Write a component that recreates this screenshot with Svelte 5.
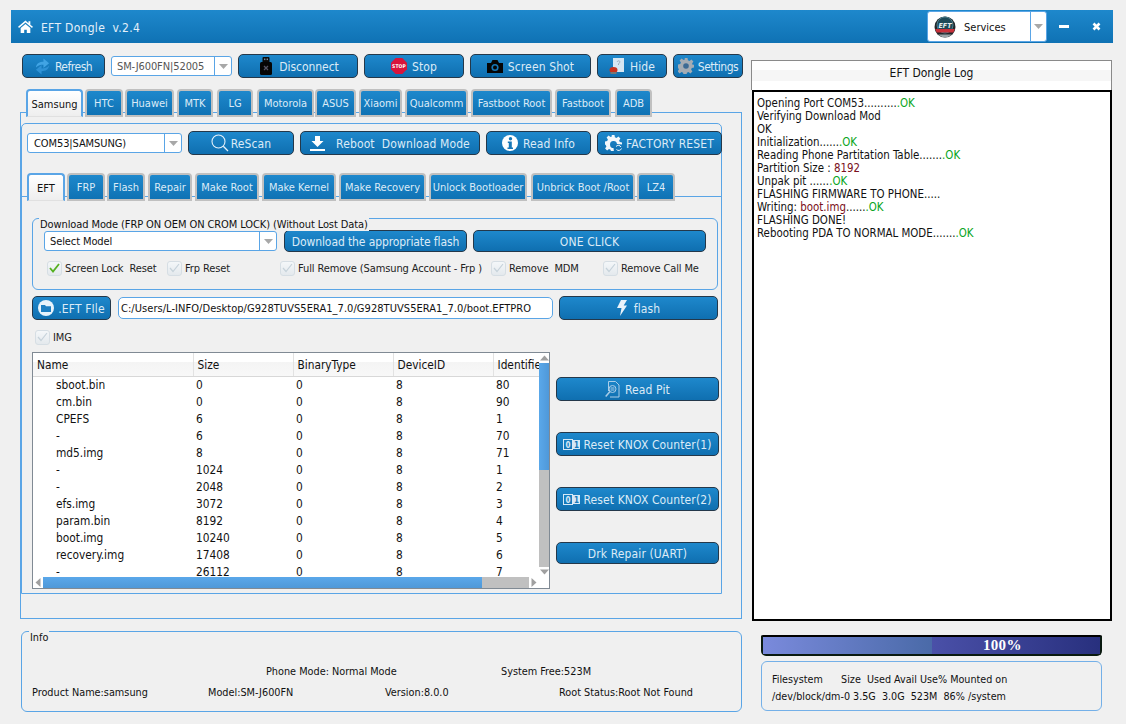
<script>
  const mainTabs = [['Samsung',57,0],['HTC',38,2],['Huawei',49,2],['MTK',36,3],['LG',36,4],['Motorola',57,4],['ASUS',41,1],['Xiaomi',43,3],['Qualcomm',63,3],['Fastboot Root',81,3],['Fastboot',56,3],['ADB',37,4]];
  const subTabs = [['EFT',38,0],['FRP',38,2],['Flash',38,2],['Repair',44,3],['Make Root',64,3],['Make Kernel',74,3],['Make Recovery',87,3],['Unlock Bootloader',98,3],['Unbrick Boot /Root',104,4],['LZ4',38,2]];
  const checks = [['Screen Lock  Reset',120,true],['Frp Reset',113,false],['Full Remove (Samsung Account - Frp )',211,false],['Remove  MDM',112,false],['Remove Call Me',110,false]];
  const rows = [['sboot.bin',0,80],['cm.bin',0,90],['CPEFS',6,1],['-',6,70],['md5.img',8,71],['-',1024,1],['-',2048,2],['efs.img',3072,3],['param.bin',8192,4],['boot.img',10240,5],['recovery.img',17408,6],['-',26112,7]];
</script>

{#snippet arrow()}
  <svg class="arrow" viewBox="0 0 9 5" width="9" height="5"><path d="M0 0h9L4.5 5z" fill="#a8a8a8"/></svg>
{/snippet}

{#snippet binary()}
  <svg viewBox="0 0 17 11" width="17" height="11"><rect x=".5" y=".5" width="9" height="10" fill="none" stroke="#d6e8f6"/><rect x="10" y="1" width="7" height="9" fill="#d6e8f6"/><text x="5" y="8.5" class="bin a">0</text><text x="13.5" y="8.5" class="bin b">1</text></svg>
{/snippet}

{#snippet tabs(list)}
  {#each list as [label, w, gap], i}
    <div class="tab" class:active={i === 0} style:width="{w}px" style:margin-left="{gap}px">{label}</div>
  {/each}
{/snippet}

<div class="app">
  <header class="title">
    <svg class="home" viewBox="0 0 16 14" width="15" height="13"><path fill="#fff" d="M8 .6 0 7.4l1 1.2L8 2.7l7 5.9 1-1.2-2.8-2.4V1.4h-2v2.1zM2.8 8.6V14h3.800v-3.6h2.800V14h3.800V8.6L8 4.200z"/></svg>
    <span class="title-text">EFT Dongle&nbsp; v.2.4</span>
    <div class="services">
      <span class="services-main">
        <svg viewBox="0 0 22 22" width="22" height="22"><circle cx="11" cy="11" r="10.500" fill="#20282c"/><circle cx="11" cy="9" r="8" fill="#1f4a58" stroke="#4f7f8c"/><text x="11" y="11.500" class="logo-text">EFT</text><path d="M1.200 13h19.600a10.500 10.500 0 0 1-1.500 3.500H2.700A10.500 10.500 0 0 1 1.200 13z" fill="#c8303a"/><path d="M4 18.500h14a10.500 10.500 0 0 1-14 0z" fill="#9aa4a8"/></svg>
        <span>Services</span>
      </span>
      <span class="services-drop">{@render arrow()}</span>
    </div>
    <span class="winbtn"><svg viewBox="0 0 10 3" width="10" height="3"><rect width="10" height="3" fill="#fff"/></svg></span>
    <span class="winbtn"><svg viewBox="0 0 9 9" width="9" height="9"><path d="M1.500 1.500l6 6M7.500 1.500l-6 6" stroke="#fff" stroke-width="2.600"/></svg></span>
  </header>

  <div class="columns">
    <main class="left">
      <div class="toolbar">
        <button class="btn w83 narrow">
          <svg viewBox="0 0 16 17" width="15" height="17"><path fill="#41a4e4" d="M1 9.500C1.500 5 5 3.500 9 3.500V0l6 5-6 5V6.500C6 6.500 3 7 1 9.500z"/><path fill="#2f92d6" d="M15 7.500C14.500 12 11 13.500 7 13.500V17l-6-5 6-5v3.500c3 0 6-.5 8-3z"/></svg>
          <span>Refresh</span>
        </button>
        <div class="combo w121 dim"><span class="combo-text">SM-J600FN|52005</span><span class="combo-drop">{@render arrow()}</span></div>
        <button class="btn w120 g7 disc">
          <svg viewBox="0 0 12 18" width="12" height="18"><rect x="2.500" y="0" width="7" height="6" rx="1" fill="#0a0a0a"/><rect x="4" y="1.500" width="1.400" height="1.600" fill="#789"/><rect x="6.600" y="1.500" width="1.400" height="1.600" fill="#789"/><rect x="0" y="5" width="12" height="13" rx="1.500" fill="#050505"/><path d="M4 9l4 4M8 9l-4 4" stroke="#556" stroke-width="1.300"/></svg>
          <span>Disconnect</span>
        </button>
        <button class="btn w100">
          <svg viewBox="0 0 16 16" width="16" height="16"><path fill="#d8143c" d="M4.700 0h6.600L16 4.700v6.600L11.300 16H4.700L0 11.300V4.700z"/><text x="8" y="10" class="stop">STOP</text></svg>
          <span>Stop</span>
        </button>
        <button class="btn w121">
          <svg viewBox="0 0 16 13" width="16" height="13"><path fill="#050505" d="M0 3h4l1.500-3h5L12 3h4v10H0z"/><circle cx="8" cy="7.500" r="3.600" fill="#1677b8"/><circle cx="8" cy="7.500" r="2" fill="#050505"/></svg>
          <span>Screen Shot</span>
        </button>
        <button class="btn w70">
          <svg viewBox="0 0 16 18" width="16" height="18"><path fill="#d6e6f2" d="M4 1h11v14H4z"/><path d="M8 5c1-2 3-1 3 0s-2 1-1.500 3" stroke="#9ab" fill="none"/><ellipse cx="4.500" cy="13" rx="4" ry="3" fill="#c8321e"/><rect x="1.500" y="15" width="6" height="2" fill="#777"/></svg>
          <span>Hide</span>
        </button>
        <button class="btn w70 narrow g4">
          <svg viewBox="0 0 16 16" width="16" height="16"><path fill="#a4acb4" d="M6.500 0h3l.4 2.200 1.600.7L13.400 1.600l2 2-1.300 1.900.7 1.600L16 6.500v3l-2.200.4-.7 1.600 1.300 1.900-2 2-1.900-1.300-1.600.7-.4 2.200h-3l-.4-2.200-1.600-.7-1.900 1.300-2-2 1.300-1.900-.7-1.600L0 9.500v-3l2.200-.4.700-1.600L1.600 2.600l2-2 1.900 1.300 1.600-.7z"/><circle cx="8" cy="8" r="2.800" fill="#3c6a94"/></svg>
          <span>Settings</span>
        </button>
      </div>

      <div class="tabbar main-tabs">{@render tabs(mainTabs)}</div>

      <section class="pane">
        <div class="frame">
          <div class="scan-row">
            <div class="combo w155 com"><span class="combo-text">COM53|SAMSUNG)</span><span class="combo-drop">{@render arrow()}</span></div>
            <button class="btn w106 g2">
              <svg viewBox="0 0 18 18" width="18" height="18"><circle cx="7.500" cy="7.500" r="6.500" fill="none" stroke="#e4f0fa" stroke-width="1.100"/><path d="M12.300 12.300l4.700 4.700" stroke="#e4f0fa" stroke-width="1.300"/></svg>
              <span>ReScan</span>
            </button>
            <button class="btn w180 wide-gap">
              <svg viewBox="0 0 15 15" width="15" height="15"><path fill="#fff" d="M5 0h5v5h3.500L7.500 11 1.500 5H5z"/><rect y="13" width="15" height="2" fill="#fff"/></svg>
              <span>Reboot&nbsp; Download Mode</span>
            </button>
            <button class="btn w105">
              <svg viewBox="0 0 16 16" width="16" height="16"><circle cx="8" cy="8" r="8" fill="#fff"/><circle cx="8.500" cy="3.700" r="1.700" fill="#1677b8"/><path fill="#1677b8" d="M5.800 6.500h4v6h1.200v1.500H5.500v-1.500h1.300V8H5.800z"/></svg>
              <span>Read Info</span>
            </button>
            <button class="btn w125 g4">
              <svg viewBox="0 0 17 16" width="17" height="16"><path fill="#f2f7fb" d="M6.500 0h3l.4 2.200 1.600.7 1.900-1.300 2 2-1.300 1.900.7 1.600 2.200.4v2l-5-.5a3.500 3.500 0 1 0-3.500 4l.5 4h-3l-.4-2.200-1.600-.7-1.900 1.300-2-2 1.300-1.900-.7-1.600L0 9.500v-3l2.200-.4.700-1.600L1.600 2.600l2-2 1.900 1.300 1.600-.7z"/><path d="M11 11.500a3 3 0 0 1 5 .5M16.500 13.500a3 3 0 0 1-5 1" stroke="#f2f7fb" fill="none"/></svg>
              <span>FACTORY RESET</span>
            </button>
          </div>

          <div class="tabbar sub-tabs">{@render tabs(subTabs)}</div>

          <div class="subpane">
            <div class="group">
              <span class="legend">Download Mode (FRP ON OEM ON CROM LOCK) (Without Lost Data)</span>
              <div class="model-row">
                <div class="combo w233"><span class="combo-text">Select Model</span><span class="combo-drop">{@render arrow()}</span></div>
                <button class="btn w183 h22 flat"><span>Download the appropriate flash</span></button>
                <button class="btn w233 h22"><span>ONE CLICK</span></button>
              </div>
              <div class="check-row">
                {#each checks as [label, w, on]}
                  <label class="check" style:width="{w}px">
                    <span class="box">
                      <svg viewBox="0 0 11 10" width="11" height="10"><path d="M1 5l3 3.500L10 1" fill="none" stroke={on ? '#55b020' : '#c6d2da'} stroke-width={on ? 1.800 : 1.200}/></svg>
                    </span>
                    <span class="lbl">{label}</span>
                  </label>
                {/each}
              </div>
            </div>

            <div class="file-row">
              <button class="btn w79 g4">
                <svg viewBox="0 0 16 16" width="16" height="16"><circle cx="8" cy="8" r="8" fill="#e8f3fb"/><path fill="#1e7fc2" d="M3 5h4l1 1.300h5V12H3z"/></svg>
                <span>.EFT FIle</span>
              </button>
              <div class="path">C:/Users/L-INFO/Desktop/G928TUVS5ERA1_7.0/G928TUVS5ERA1_7.0/boot.EFTPRO</div>
              <button class="btn w159 g7">
                <svg viewBox="0 0 10 16" width="10" height="16"><path fill="#eaf3fa" d="M4 0h6L6.700 5.500H10L3 16l1.500-8H0z"/></svg>
                <span>flash</span>
              </button>
            </div>

            <label class="check img-row">
              <span class="box"><svg viewBox="0 0 11 10" width="11" height="10"><path d="M1 5l3 3.500L10 1" fill="none" stroke="#c6d2da" stroke-width="1.200"/></svg></span>
              <span class="lbl">IMG</span>
            </label>

            <div class="table-row">
              <div class="table">
                <div class="table-view">
                  <table>
                    <thead>
                      <tr><th class="c-name">Name</th><th class="c-num">Size</th><th class="c-num">BinaryType</th><th class="c-num">DeviceID</th><th class="c-num">Identifier</th></tr>
                    </thead>
                    <tbody>
                      {#each rows as [name, size, id]}
                        <tr><td class="c-name">{name}</td><td>{size}</td><td>0</td><td>8</td><td>{id}</td></tr>
                      {/each}
                    </tbody>
                  </table>
                  <div class="vscroll">
                    <svg viewBox="0 0 9 5" width="9" height="5"><path d="M0 5h9L4.500 0z" fill="#a0a0a0"/></svg>
                    <div class="vthumb"></div>
                    <div class="vtrack"></div>
                    <svg viewBox="0 0 9 5" width="9" height="5"><path d="M0 0h9L4.500 5z" fill="#a0a0a0"/></svg>
                  </div>
                </div>
                <div class="hscroll">
                  <svg viewBox="0 0 5 9" width="5" height="9"><path d="M5 0v9L0 4.500z" fill="#a0a0a0"/></svg>
                  <div class="hthumb"></div>
                  <div class="htrack"></div>
                  <svg viewBox="0 0 5 9" width="5" height="9"><path d="M0 0v9l5-4.500z" fill="#a0a0a0"/></svg>
                </div>
              </div>

              <div class="side-buttons">
                <button class="btn full">
                  <svg viewBox="0 0 15 17" width="15" height="17"><path d="M3.500 10V.5h7l3.500 3.500v12H5" fill="none" stroke="#a9cde8"/><circle cx="7.500" cy="8" r="3.500" fill="none" stroke="#a9cde8"/><path d="M5.500 7h4M5.500 9h4" stroke="#a9cde8"/><path d="M5 10.500.7 15.500" stroke="#a9cde8" stroke-width="1.500"/></svg>
                  <span>Read Pit</span>
                </button>
                <button class="btn full g3">{@render binary()}<span>Reset KNOX Counter(1)</span></button>
                <button class="btn full g3">{@render binary()}<span>Reset KNOX Counter(2)</span></button>
                <button class="btn full h22"><span>Drk Repair (UART)</span></button>
              </div>
            </div>
          </div>
        </div>
      </section>

      <section class="info">
        <span class="info-title">Info</span>
        <div class="info-row first"><span class="i1">Phone Mode: Normal Mode</span><span>System Free:523M</span></div>
        <div class="info-row second"><span class="i2">Product Name:samsung</span><span class="i3">Model:SM-J600FN</span><span class="i4">Version:8.0.0</span><span>Root Status:Root Not Found</span></div>
      </section>
    </main>

    <aside class="right">
      <div class="log-head"><span>EFT Dongle Log</span></div>
      <div class="log">
        <div>Opening Port COM53..........<b>.OK</b></div>
        <div>Verifying Download Mod</div>
        <div>OK</div>
        <div>Initialization......<b>.OK</b></div>
        <div>Reading Phone Partitation Table.......<b>.OK</b></div>
        <div>Partition Size : <i>8192</i></div>
        <div>Unpak pit ......<b>.OK</b></div>
        <div>FLASHING FIRMWARE TO PHONE.....</div>
        <div>Writing: <i>boot.img</i>......<b>.OK</b></div>
        <div>FLASHING DONE!</div>
        <div>Rebooting PDA TO NORMAL MODE.......<b>.OK</b></div>
      </div>
      <div class="progress"><div class="p1"></div><div class="p2"></div><span class="ptext">100%</span></div>
      <div class="fs">
        <div>Filesystem&nbsp;&nbsp;&nbsp;&nbsp;&nbsp; Size&nbsp; Used Avail Use% Mounted on</div>
        <div>/dev/block/dm-0 3.5G&nbsp; 3.0G&nbsp; 523M&nbsp; 86% /system</div>
      </div>
    </aside>
  </div>
</div>

<style>
  :global(body) { margin: 0; background: #f0f0f0; }
  .app {
    width: 1126px; height: 724px; box-sizing: border-box; overflow: hidden;
    padding-top: 10px; background: #f0f0f0; color: #111;
    font-family: "DejaVu Sans", sans-serif; font-stretch: condensed; font-size: 11px;
  }
  .title {
    margin: 0 13px 0 11px; height: 33px; display: flex; align-items: center;
    background: linear-gradient(#1e88cc, #0f72b4); color: #e4f0fa;
  }
  .home { margin-left: 7px; }
  .title-text { margin-left: 8px; font-size: 12px; flex: 1; letter-spacing: .3px; padding-top: 2px; }
  .services { width: 120px; height: 31px; margin-left: 1px; background: #fff; border: 1px solid #5aa5e6; border-radius: 3px; box-sizing: border-box; display: flex; color: #111; font-size: 11px; }
  .services-main { flex: 1; display: flex; align-items: center; padding-left: 6px; gap: 8px; }
  .services-main span { padding-top: 1px; }
  .services-drop { width: 15px; border-left: 1px solid #5aa5e6; display: flex; align-items: center; justify-content: center; }
  .logo-text { font-size: 7px; font-weight: 700; font-style: italic; fill: #e8eef0; text-anchor: middle; }
  .winbtn { width: 33px; display: flex; justify-content: center; }

  .columns { display: flex; align-items: flex-start; }
  .left { width: 722px; margin-left: 20px; flex: none; }
  .right { width: 361px; margin: 17px 0 0 9px; flex: none; }

  .toolbar { display: flex; align-items: center; gap: 6px; margin: 11px -2px 0 2px; height: 24px; }

  .btn {
    box-sizing: border-box; height: 24px; padding: 1px 0 0; flex: none;
    display: flex; align-items: center; justify-content: center; gap: 5px;
    background: linear-gradient(#1e88cc, #0f6fb0);
    border: 1px solid #24384a; border-radius: 5px;
    color: #dcebf7; font: inherit; font-size: 12px; letter-spacing: .12px; white-space: nowrap;
  }
  .btn svg { margin-top: -1px; }
  .btn.g2 { gap: 2px; }
  .btn.g3 { gap: 3px; }
  .btn.g4 { gap: 4px; }
  .btn.g7 { gap: 7px; }
  .btn.disc { padding-left: 3px; letter-spacing: -.05px; }
  .btn.narrow { letter-spacing: -.5px; }
  .btn.flat { letter-spacing: -.1px; }
  .btn.wide-gap { gap: 11px; }
  .btn.full { width: 163px; }
  .btn.h22 { height: 22px; }
  .w70 { width: 70px; } .w79 { width: 79px; } .w83 { width: 83px; } .w100 { width: 100px; }
  .w105 { width: 105px; } .w106 { width: 106px; } .w120 { width: 120px; } .w121 { width: 121px; }
  .w125 { width: 125px; } .w155 { width: 155px; } .w159 { width: 159px; } .w180 { width: 180px; }
  .w183 { width: 183px; } .w233 { width: 233px; }

  .stop { font-size: 5px; font-weight: 700; fill: #fff; text-anchor: middle; }
  .bin { font-size: 8px; font-weight: 700; text-anchor: middle; }
  .bin.a { fill: #d6e8f6; }
  .bin.b { fill: #1677b8; }

  .combo {
    box-sizing: border-box; height: 20px; flex: none; display: flex; align-items: center;
    background: #fff; border: 1px solid #5aa5e6; border-radius: 3px; color: #111;
  }
  .combo.dim { color: #555; }
  .combo-text { flex: 1; padding: 1px 0 0 5px; white-space: nowrap; overflow: hidden; letter-spacing: -.1px; }
  .combo.com .combo-text { padding-left: 6px; }
  .combo-drop { width: 16px; align-self: stretch; border-left: 1px solid #5aa5e6; display: flex; align-items: center; justify-content: center; }

  .tabbar { display: flex; position: relative; z-index: 1; height: 28px; margin-bottom: -5px; }
  .main-tabs { margin: 11px 0 -5px 6px; }
  .sub-tabs { margin: 18px 0 -5px 5px; }
  .tab {
    box-sizing: border-box; height: 28px; flex: none; display: flex; align-items: center; justify-content: center;
    background: linear-gradient(#1e88cc, #0f72b4); color: #dcebf7; white-space: nowrap; padding-top: 1px;
    border: 2px solid #c0c0c0; border-radius: 4px 4px 0 0;
  }
  .tab.active {
    background: linear-gradient(#ffffff, #eeeeee); color: #111;
    border: 2px solid #5aa5e6; border-bottom: 1px solid #e0e0e0;
  }

  .pane { box-sizing: border-box; height: 507px; border: 1px solid #5aa5e6; }
  .frame {
    box-sizing: border-box; width: 701px; height: 471px; margin-top: 10px;
    border: 1px solid #5aa5e6; border-radius: 5px 5px 0 0;
    padding-top: 7px;
  }
  .scan-row { display: flex; align-items: center; gap: 6px; height: 24px; margin: 0 -2px 0 5px; }
  .subpane { border-top: 1px solid #5aa5e6; padding: 21px 0 0 10px; }

  .group {
    position: relative; box-sizing: border-box; width: 686px; height: 72px;
    border: 1px solid #5aa5e6; border-radius: 6px; padding: 11px 0 0 11px;
  }
  .legend { position: absolute; left: 6px; top: -1px; padding: 0 1px; line-height: 13px; background: #f0f0f0; white-space: nowrap; letter-spacing: -.1px; }
  .model-row { display: flex; align-items: center; height: 22px; gap: 7px; }
  .model-row .btn:last-child { margin-left: -1px; }
  .check-row { display: flex; margin: 8px 0 0 3px; height: 16px; }
  .check { display: flex; align-items: center; gap: 3px; flex: none; white-space: nowrap; color: #222; }
  .lbl { padding-top: 1px; letter-spacing: -.12px; white-space: pre; }
  .box {
    box-sizing: border-box; width: 15px; height: 15px; border: 1px solid #d6dee4; border-radius: 3px;
    background: linear-gradient(#f4f7f9, #e4e9ed); display: flex; align-items: center; justify-content: center; flex: none;
  }

  .file-row { display: flex; align-items: center; gap: 6px; height: 24px; margin-top: 6px; }
  .file-row .path { margin-left: 1px; }
  .path {
    box-sizing: border-box; width: 435px; height: 22px; flex: none; display: flex; align-items: center; padding: 1px 0 0 2px;
    background: #fff; border: 1px solid #5aa5e6; border-radius: 5px; white-space: nowrap; letter-spacing: .05px;
  }
  .img-row { margin: 9px 0 0 3px; height: 16px; }

  .table-row { display: flex; gap: 6px; margin-top: 7px; align-items: flex-start; }
  .table { box-sizing: border-box; width: 518px; height: 237px; border: 1px solid #808a94; background: #fff; display: flex; flex-direction: column; flex: none; }
  .table-view { display: flex; height: 225px; overflow: hidden; }
  table { border-collapse: collapse; table-layout: fixed; width: 506px; flex: none; display: block; overflow: hidden; font-size: 11.8px; }
  thead tr { height: 23px; background: linear-gradient(#fff 40%, #f4f4f4 40%, #f8f8f8); }
  th { box-sizing: border-box; font-weight: 400; text-align: left; padding: 2px 0 0 4px; width: 100px; height: 23px; border-right: 1px solid #e2e2e2; border-bottom: 1px solid #d8d8d8; overflow: hidden; white-space: nowrap; max-width: 100px; }
  th.c-name { width: 160px; max-width: 160px; }
  th:last-child { border-right: 0; width: 46px; max-width: 46px; }
  tbody tr { height: 17px; }
  td { padding: 0 0 0 3px; line-height: 17px; height: 17px; white-space: nowrap; }
  td.c-name { padding-left: 23px; }
  .vscroll { width: 10px; flex: none; margin-left: auto; display: flex; flex-direction: column; align-items: center; background: #fff; }
  .vscroll svg { height: 10px; flex: none; }
  .vthumb { width: 100%; height: 107px; background: linear-gradient(90deg, #5aa8ea, #4f98d8); flex: none; }
  .vtrack { width: 100%; flex: 1; background: #c0c0c0; }
  .hscroll { height: 11px; display: flex; align-items: center; background: #fff; }
  .hscroll svg { width: 10px; flex: none; }
  .hthumb { width: 439px; height: 100%; background: linear-gradient(#5aa8ea, #4f98d8); flex: none; }
  .htrack { width: 47px; height: 100%; background: #c0c0c0; flex: none; }

  .side-buttons { display: flex; flex-direction: column; gap: 31px; padding-top: 25px; width: 163px; flex: none; }

  .info {
    position: relative; box-sizing: border-box; width: 721px; height: 81px; margin: 12px 0 0 1px;
    border: 1px solid #5aa5e6; border-radius: 6px; font-size: 10.8px;
  }
  .info-title { position: absolute; left: 7px; top: -1px; padding: 0 1px; background: #f0f0f0; line-height: 13px; }
  .info-row { display: flex; white-space: nowrap; position: relative; }
  .info-row.first { padding: 33px 0 0 244px; line-height: 13px; }
  .info-row.second { padding: 8px 0 0 10px; line-height: 13px; }
  .i1 { width: 235px; } .i2 { width: 176px; } .i3 { width: 177px; } .i4 { width: 174px; }

  .log-head {
    box-sizing: border-box; height: 30px; border: 1px solid #8a8a8a; border-bottom: 0;
    background: linear-gradient(#fff 30%, #f6f6f6 30%, #f6f6f6 70%, #fff 70%);
    display: flex; align-items: center; justify-content: center; padding-bottom: 5px; font-size: 12px;
  }
  .log {
    box-sizing: border-box; height: 531px; margin-left: 1px; border: 2px solid #000; background: #fff;
    padding: 5px 0 0 3px; line-height: 13px; font-size: 11.4px; color: #111;
  }
  .log b { font-weight: 400; color: #09a51c; }
  .log i { font-style: normal; color: #7a1020; }
  .progress {
    position: relative; box-sizing: border-box; width: 341px; height: 21px; margin: 14px 0 0 10px;
    border: 2px solid #0a1a10; border-top-color: #000; border-radius: 2px 2px 5px 5px;
    display: flex; box-shadow: inset 1px 1px 0 #fff, inset -1px -1px 0 #fff;
  }
  .p1 { width: 169px; background: linear-gradient(90deg, #7a8adc, #4a6aa8); }
  .p2 { flex: 1; background: linear-gradient(90deg, #4a50a8, #28307e); }
  .ptext { position: absolute; left: 220px; top: 0; color: #fff; font: 700 15px/17px "Liberation Serif", serif; letter-spacing: .3px; }
  .fs {
    box-sizing: border-box; width: 341px; height: 50px; margin: 5px 0 0 10px; padding: 9px 0 0 10px;
    border: 1px solid #74b0e8; border-radius: 6px; line-height: 17px; white-space: nowrap; font-size: 10.7px;
  }
</style>
